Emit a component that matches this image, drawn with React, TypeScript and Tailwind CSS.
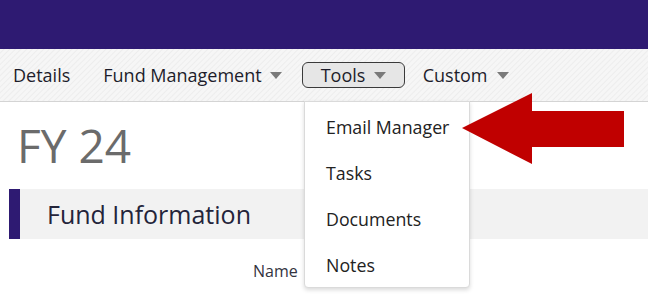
const font = "font-['Open_Sans','Liberation_Sans',sans-serif]";

function Caret() {
  return (
    <svg width="12" height="7" viewBox="0 0 12 7" className="shrink-0">
      <path d="M0 0H12L6 7Z" fill="#7a7a7a" />
    </svg>
  );
}

const menu = ["Email Manager", "Tasks", "Documents", "Notes"];

export default function App() {
  return (
    <div className={`relative w-[648px] h-[305px] overflow-hidden bg-white ${font}`}>
      <div className="h-[49px] bg-[#2e1a72]" />
      <nav className="h-[53px] flex items-center pl-[13px] text-[18px] text-[#1d1d2b] border-b border-[#d4d4d4] bg-[#f4f4f4] bg-[repeating-linear-gradient(135deg,#f6f6f6_0px,#f6f6f6_2px,#ededed_3px,#f6f6f6_4px)]">
        <span>Details</span>
        <span className="ml-[33px] flex items-center gap-[8px]">
          Fund Management <Caret />
        </span>
        <span className="ml-[20px] h-[26px] w-[103px] flex items-center gap-[9px] pl-[18px] rounded-[6px] border-[1.5px] border-[#3a3a3a] bg-[#e6e6e6]">
          Tools <Caret />
        </span>
        <span className="ml-[18px] flex items-center gap-[9px]">
          Custom <Caret />
        </span>
      </nav>

      <div className="pl-[9px]">
        <h1 className="mt-[18px] pl-[8px] text-[46px] leading-[50px] text-[#6b6b6b]">FY 24</h1>
        <div className="mt-[19px] h-[50px] flex border-l-[11px] border-[#2e1a72] bg-[#f2f2f2]">
          <h2 className="pl-[27px] text-[25px] leading-[50px] text-[#24243a]">Fund Information</h2>
        </div>
        <div className="mt-[22px] pl-[244px] text-[16px] leading-[20px] text-[#333340]">Name</div>
      </div>

      <div className="absolute left-[304px] top-[101px] w-[166px] h-[187px] bg-white border border-[#dadada] rounded-b-[4px] shadow-[0_2px_4px_rgba(0,0,0,0.15)] pt-[2px]">
        {menu.map((m) => (
          <div key={m} className="h-[46px] flex items-center pl-[21px] text-[17.8px] text-[#222]">
            {m}
          </div>
        ))}
      </div>

      <svg className="absolute left-0 top-0" width="648" height="305" viewBox="0 0 648 305">
        <polygon points="462,128 532,93 532,111 624,111 624,147 532,147 532,164" fill="#c00000" />
      </svg>
    </div>
  );
}
